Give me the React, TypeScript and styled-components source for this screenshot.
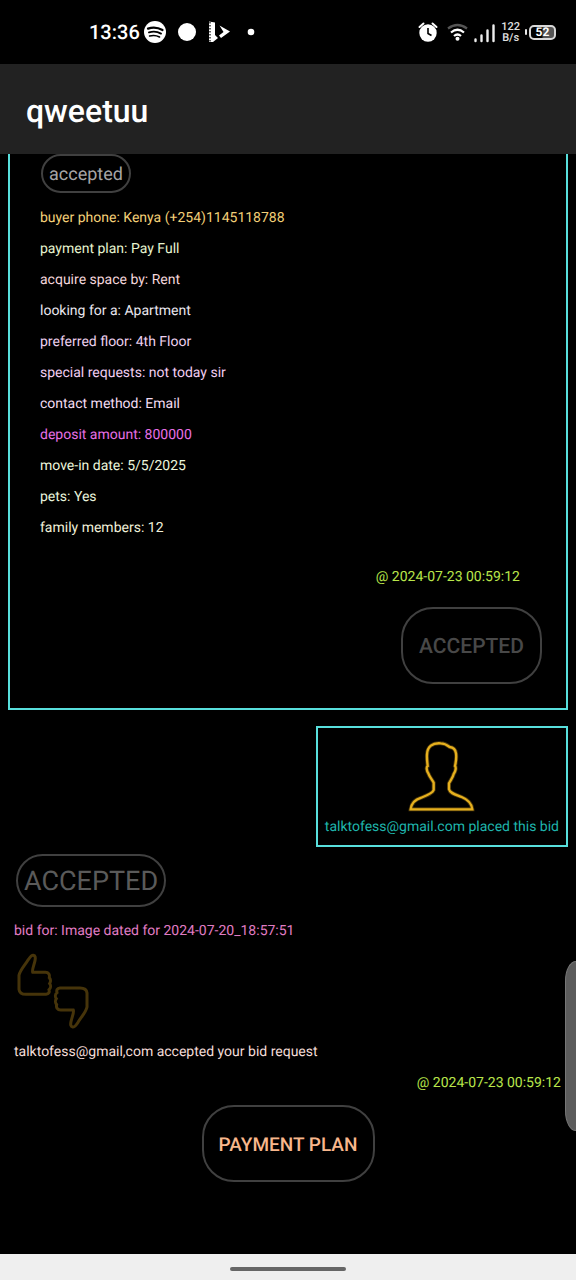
import React from 'react';
import styled, { createGlobalStyle } from 'styled-components';

const GlobalStyle = createGlobalStyle`
  * { box-sizing: border-box; }
  body {
    margin: 0;
    background: #000;
    color: #fff;
    font-family: Roboto, "Liberation Sans", sans-serif;
    text-rendering: geometricPrecision;
  }
`;

const Screen = styled.div`
  position: relative;
  display: flex;
  flex-direction: column;
  min-height: 100vh;
  background: #000;
`;

const StatusBar = styled.div`
  display: flex;
  justify-content: space-between;
  align-items: center;
  height: 64px;
  padding: 0 20px 0 89px;
`;

const StatusGroup = styled.div<{ $gap: number }>`
  display: flex;
  align-items: center;
  gap: ${({ $gap }) => $gap}px;
`;

const Clock = styled.span`
  font-size: 20px;
  line-height: 24px;
  font-weight: 500;
`;

const NetSpeed = styled.span`
  font-size: 11px;
  line-height: 11px;
  font-weight: 500;
  text-align: center;
  color: #e0e0e0;
`;

const Battery = styled.span`
  display: flex;
  align-items: center;
  gap: 2px;

  &::before {
    content: '';
    width: 2px;
    height: 6px;
    border-radius: 1px;
    background: #e8e8e8;
  }
`;

const BatteryLevel = styled.span`
  width: 27px;
  height: 15px;
  border: 2px solid #d8d8d8;
  border-radius: 5px;
  background: linear-gradient(to right, #000 45%, #555 55%);
  font-size: 12px;
  line-height: 11px;
  font-weight: 700;
  text-align: center;
`;

const AppBar = styled.header`
  display: flex;
  align-items: center;
  height: 90px;
  padding: 4px 26px 0;
  background: #222;
`;

const Title = styled.h1`
  margin: 0;
  font-size: 32px;
  line-height: 40px;
  font-weight: 500;
`;

const Feed = styled.main`
  flex: 1;
  display: flex;
  flex-direction: column;
  padding: 0 8px 72px;
`;

const BidCard = styled.section`
  display: flex;
  flex-direction: column;
  align-items: flex-start;
  padding: 0 24px 24px 30px;
  border: 2px solid #58dfdc;
  border-top: none;
`;

const Chip = styled.span<{ $large?: boolean }>`
  align-self: flex-start;
  margin: ${({ $large }) => ($large ? '0 8px' : '0 1px')};
  padding: 2px 6px 0;
  border: 2px solid #404040;
  border-radius: 27px;
  font-size: ${({ $large }) => ($large ? 27 : 18)}px;
  line-height: ${({ $large }) => ($large ? 47 : 33)}px;
  color: ${({ $large }) => ($large ? '#5a5a5a' : '#a6a6a6')};
`;

const Details = styled.ul`
  margin: 10px 0 18px;
  padding: 0;
  list-style: none;
`;

const Detail = styled.li<{ $color: string }>`
  font-size: 14px;
  line-height: 31px;
  color: ${({ $color }) => $color};
`;

const Note = styled.p<{ $color: string }>`
  margin: 0 6px;
  font-size: 14px;
  line-height: 31px;
  color: ${({ $color }) => $color};
`;

const Timestamp = styled.time<{ $inset: number }>`
  align-self: flex-end;
  margin-right: ${({ $inset }) => $inset}px;
  font-size: 14px;
  line-height: 31px;
  color: #b9e64b;
`;

const PillButton = styled.button<{ $align: string; $color: string; $size: number; $width: number }>`
  align-self: ${({ $align }) => $align};
  width: ${({ $width }) => $width}px;
  height: 77px;
  padding: 2px 0 0;
  border: 2px solid #404040;
  border-radius: 32px;
  background: transparent;
  font: 500 ${({ $size }) => $size}px/24px Roboto, "Liberation Sans", sans-serif;
  text-rendering: inherit;
  color: ${({ $color }) => $color};
`;

const CardAction = styled.div`
  display: flex;
  flex-direction: column;
  align-self: stretch;
  margin-top: 14px;
`;

const BidderBox = styled.section`
  display: flex;
  flex-direction: column;
  align-items: center;
  align-self: flex-end;
  margin: 16px 0 7px;
  padding: 12px 7px 2px;
  border: 2px solid #58dfdc;
`;

const BidderText = styled.p`
  margin: 0;
  font-size: 14px;
  line-height: 31px;
  color: #1fb5ac;
`;

const BidSummary = styled.section`
  display: flex;
  flex-direction: column;
  margin-top: 9px;
`;

const ThumbsIcon = styled.svg`
  display: block;
  margin: 5px 8px 7px;
`;

const PaymentRow = styled.div`
  display: flex;
  flex-direction: column;
  margin-top: 6px;
`;

const EdgeHandle = styled.div`
  position: absolute;
  right: 0;
  bottom: 149px;
  width: 11px;
  height: 170px;
  border: 1px solid #767676;
  border-right: none;
  border-radius: 11px 0 0 11px / 20px 0 0 20px;
  background: #5c5c5c;
`;

const NavBar = styled.div`
  display: flex;
  justify-content: center;
  align-items: center;
  height: 26px;
  padding-top: 3px;
  background: #efefef;
`;

const NavPill = styled.span`
  width: 116px;
  height: 4px;
  border-radius: 2px;
  background: #666;
`;

const details: [string, string][] = [
  ['buyer phone: Kenya (+254)1145118788', '#f3d078'],
  ['payment plan: Pay Full', '#e6f3cf'],
  ['acquire space by: Rent', '#f3d6dc'],
  ['looking for a: Apartment', '#e9e6ee'],
  ['preferred floor: 4th Floor', '#ecd0ee'],
  ['special requests: not today sir', '#f0cdf0'],
  ['contact method: Email', '#f2dcf2'],
  ['deposit amount: 800000', '#e76fe5'],
  ['move-in date: 5/5/2025', '#edf5dc'],
  ['pets: Yes', '#e8f3dc'],
  ['family members: 12', '#f0f0da'],
];

const THUMB =
  'M100 46C95 44 90 52 84 60C76 74 60 90 57 106L57 148C58 158 66 163 78 163L138 163C147 162 149 156 147 149C153 144 153 136 149 131C153 125 152 117 148 113C150 104 146 97 136 97L98 97C95 92 102 76 105 62C107 52 106 47 100 46Z';

const PERSON =
  'M410 82C385 80 370 92 369 115C368 130 370 138 371 150C366 152 368 165 373 172C376 182 384 190 389 200L389 222C386 232 370 238 352 245C335 250 322 262 320 280L505 280C503 262 490 250 473 243C455 236 438 232 435 220L435 202C440 192 447 184 449 174C455 166 457 154 453 150C456 138 458 128 456 112C454 98 446 94 437 93C428 86 420 82 410 82Z';

function LeftStatusIcons() {
  return (
    <svg width="112" height="24" viewBox="0 0 112 24" aria-hidden="true">
      <circle cx="11" cy="12" r="11" fill="#fff" />
      <g fill="none" stroke="#000" strokeLinecap="round">
        <path d="M4 8.6Q11.500 6 18.500 10" strokeWidth="2.200" />
        <path d="M5 12.400Q11.500 10.400 17 13.600" strokeWidth="1.900" />
        <path d="M5.600 16Q11 14.500 15.500 17" strokeWidth="1.600" />
      </g>
      <circle cx="43" cy="12" r="9" fill="#fff" />
      <path d="M65 1.500L71 2.500V15L74 18L69 22H65Z" fill="#fff" />
      <path d="M66 2V22" stroke="#000" strokeWidth="1.200" strokeDasharray="1.500 1.500" />
      <path d="M75.500 5.500L86 11.500L77 18L75 15.500L79.500 12Z" fill="#fff" />
      <circle cx="107" cy="12" r="3.300" fill="#fff" />
    </svg>
  );
}

function RightStatusIcons() {
  return (
    <svg width="78" height="24" viewBox="0 0 78 24" aria-hidden="true">
      <circle cx="10" cy="13" r="8.700" fill="#fff" />
      <path d="M1.500 7L5.500 3.500M18.500 7L14.500 3.500" stroke="#fff" strokeWidth="2" strokeLinecap="round" />
      <path d="M10 8V13.500L13.500 15.500" fill="none" stroke="#000" strokeWidth="1.600" />
      <g fill="none" strokeWidth="2.200">
        <path d="M30 8.500Q39.500 1.500 49 8.500" stroke="#555" />
        <path d="M33 12.500Q39.500 7 46 12.500" stroke="#fff" />
        <path d="M36 16Q39.500 13 43 16" stroke="#fff" />
      </g>
      <circle cx="39.500" cy="18.800" r="2" fill="#fff" />
      <path d="M57.500 21V19.500M63.500 21V15.500M69.500 21V10.500M75.500 21V5.500" stroke="#eee" strokeWidth="2.400" strokeLinecap="round" />
    </svg>
  );
}

export default function App() {
  return (
    <Screen>
      <GlobalStyle />
      <StatusBar>
        <StatusGroup $gap={4}>
          <Clock>13:36</Clock>
          <LeftStatusIcons />
        </StatusGroup>
        <StatusGroup $gap={5}>
          <RightStatusIcons />
          <NetSpeed>
            122
            <br />
            B/s
          </NetSpeed>
          <Battery>
            <BatteryLevel>52</BatteryLevel>
          </Battery>
        </StatusGroup>
      </StatusBar>
      <AppBar>
        <Title>qweetuu</Title>
      </AppBar>
      <Feed>
        <BidCard>
          <Chip>accepted</Chip>
          <Details>
            {details.map(([text, color]) => (
              <Detail key={text} $color={color}>
                {text}
              </Detail>
            ))}
          </Details>
          <Timestamp $inset={22}>@ 2024-07-23 00:59:12</Timestamp>
          <CardAction>
            <PillButton disabled $align="flex-end" $color="#484848" $size={21} $width={141}>
              ACCEPTED
            </PillButton>
          </CardAction>
        </BidCard>
        <BidderBox>
          <svg width="67" height="72" viewBox="312 72 201 216" aria-hidden="true">
            <path d={PERSON} fill="none" stroke="#7a5a10" strokeOpacity="0.600" strokeWidth="12" />
            <path d={PERSON} fill="none" stroke="#e6b01e" strokeWidth="7" />
          </svg>
          <BidderText>talktofess@gmail.com placed this bid</BidderText>
        </BidderBox>
        <Chip $large>ACCEPTED</Chip>
        <BidSummary>
          <Note $color="#e07cc4">bid for: Image dated for 2024-07-20_18:57:51</Note>
          <ThumbsIcon width="74" height="78" viewBox="48 36 222 234" aria-hidden="true">
            <g fill="none" stroke="#46340a" strokeWidth="9">
              <path d={THUMB} />
              <path d={THUMB} transform="rotate(180 159 153.500)" />
            </g>
          </ThumbsIcon>
          <Note $color="#f3dcd8">talktofess@gmail,com accepted your bid request</Note>
          <Timestamp $inset={7}>@ 2024-07-23 00:59:12</Timestamp>
          <PaymentRow>
            <PillButton $align="center" $color="#f8b78c" $size={19} $width={173}>
              PAYMENT PLAN
            </PillButton>
          </PaymentRow>
        </BidSummary>
      </Feed>
      <EdgeHandle />
      <NavBar>
        <NavPill />
      </NavBar>
    </Screen>
  );
}
